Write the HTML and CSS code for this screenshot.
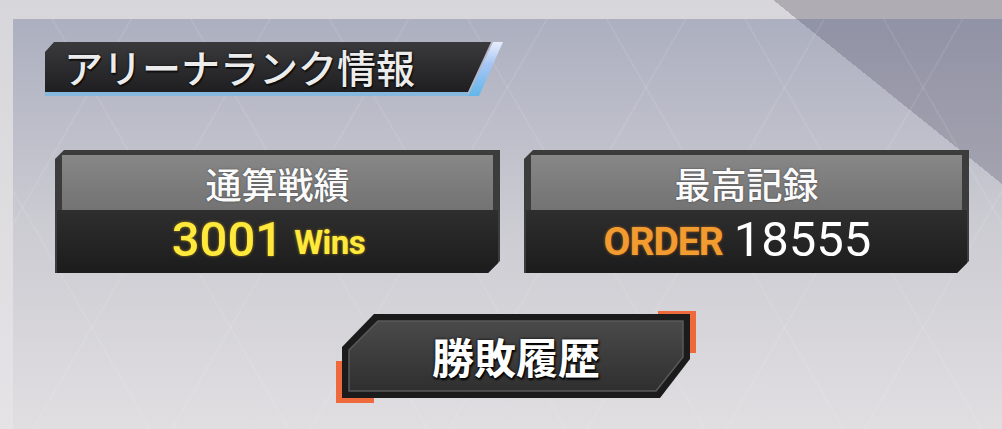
FILE: index.html
```html
<!DOCTYPE html>
<html lang="ja">
<head>
    <meta charset="utf-8">
    <title>アリーナランク情報</title>
    <link rel="stylesheet" href="styles.css">
</head>
<body>
    <div class="screen">
        <div class="top-strip"></div>
        <div class="panel">
            <div class="heading">
                <span class="heading-text">アリーナランク情報</span>
            </div>

            <div class="cards">
                <div class="card">
                    <div class="card-head">通算戦績</div>
                    <div class="card-body">
                        <span class="wins-num">3001</span>
                        <span class="wins-unit">Wins</span>
                    </div>
                </div>
                <div class="card">
                    <div class="card-head">最高記録</div>
                    <div class="card-body">
                        <span class="order-label">ORDER</span>
                        <span class="order-num">18555</span>
                    </div>
                </div>
            </div>

            <button class="history-btn" type="button">
                <svg class="btn-shape" viewBox="0 0 360 92" width="360" height="92">
                    <defs>
                        <linearGradient id="btnFill" x1="0" y1="0" x2="0" y2="1">
                            <stop offset="0" stop-color="#4a4a4b"/>
                            <stop offset="1" stop-color="#2f2f30"/>
                        </linearGradient>
                    </defs>
                    <!-- orange corner brackets -->
                    <rect x="322" y="0" width="38" height="42" fill="#ee6a3c"/>
                    <rect x="0" y="50" width="38" height="42" fill="#ee6a3c"/>
                    <!-- outer rim -->
                    <polygon points="38,3 354,3 354,48 324,87 6,87 6,36" fill="#1b1b1c"/>
                    <!-- inner plate -->
                    <polygon points="42,10 347,10 347,46 320,80 13,80 13,39" fill="url(#btnFill)" stroke="#5a5a5b" stroke-width="1.5"/>
                </svg>
                <span class="btn-label">勝敗履歴</span>
            </button>
        </div>
    </div>
</body>
</html>
```

FILE: styles.css
```css
* {
    margin: 0;
    padding: 0;
    box-sizing: border-box;
}
body {
    width: 1002px;
    height: 429px;
    overflow: hidden;
    font-family: "Noto Sans CJK JP", "Noto Sans", sans-serif;
}
.screen {
    width: 1002px;
    height: 429px;
    display: flex;
    flex-direction: column;
    background:
        linear-gradient(38.8deg, transparent 85.1%, rgba(70, 62, 80, 0.28) 85.1%),
        linear-gradient(to bottom, #d7d6da, #e5e3e5);
}
.top-strip {
    height: 19px;
    flex: none;
}
.panel {
    flex: 1;
    margin-left: 13px;
    display: flex;
    flex-direction: column;
    align-items: flex-start;
    padding-left: 32px;
    background:
        repeating-linear-gradient(60deg, transparent 0 118px, rgba(255, 255, 255, 0.07) 118px 120px),
        repeating-linear-gradient(-60deg, transparent 0 118px, rgba(255, 255, 255, 0.07) 118px 120px),
        linear-gradient(to bottom, rgba(80, 92, 135, 0.32), rgba(120, 125, 150, 0.18) 50%, rgba(170, 165, 175, 0.08));
}

/* heading bar */
.heading {
    position: relative;
    width: 458px;
    height: 54px;
    margin-top: 23px;
    display: flex;
    align-items: center;
    padding: 0 0 6px 19px;
}
.heading::before {
    content: "";
    position: absolute;
    inset: 0;
    background:
        linear-gradient(to bottom, transparent 50px, #86b7de 50px),
        linear-gradient(to bottom, #3a3a3c, #1f1f21 50px);
    clip-path: polygon(9px 0, 446px 0, 423px 50px, 423px 54px, 0 54px, 0 10px);
}
.heading::after {
    content: "";
    position: absolute;
    inset: 0;
    background: linear-gradient(to bottom, #e8eefc, #a8c6f4 40%, #62b6ea);
    clip-path: polygon(448px 0, 458px 0, 434px 54px, 423px 54px);
}
.heading-text {
    position: relative;
    font-size: 39px;
    font-weight: 500;
    color: #ececec;
    text-shadow: 0 0 2px #000, 1px 2px 1px #111;
}

/* cards */
.cards {
    display: flex;
    gap: 24px;
    margin-top: 54px;
    margin-left: 10px;
}
.card {
    width: 445px;
    height: 123px;
    display: flex;
    flex-direction: column;
    background: #3c3c3d;
    padding: 5px 7px 0;
    clip-path: polygon(9px 0, 100% 0, 100% calc(100% - 12px), calc(100% - 12px) 100%, 0 100%, 0 9px);
}
.card-head {
    height: 55px;
    flex: none;
    display: flex;
    align-items: center;
    justify-content: center;
    background: linear-gradient(to bottom, #878788, #737374);
    color: #fbfbfb;
    font-size: 36px;
    font-weight: 500;
    text-shadow: 0 0 2px rgba(0, 0, 0, 0.5);
}
.card-body {
    flex: 1;
    margin: 0 -5px;
    display: flex;
    align-items: center;
    justify-content: center;
    gap: 11px;
    padding: 0 18px 4px 0;
    background: linear-gradient(to bottom, #2e2e2f, #1c1c1d);
    font-family: Roboto, "Liberation Sans", sans-serif;
}
.wins-num {
    font-size: 49px;
    font-weight: 500;
    color: #ffe93c;
    text-shadow: 0 0 3px rgba(255, 200, 0, 0.6);
}
.wins-unit {
    font-size: 33px;
    font-weight: 700;
    letter-spacing: -0.5px;
    color: #ffe93c;
    text-shadow: 0 0 3px rgba(255, 200, 0, 0.6);
    margin-top: 6px;
}
.order-label {
    font-size: 39px;
    font-weight: 700;
    letter-spacing: -1px;
    color: #f29b30;
    text-shadow: 0 0 3px rgba(255, 140, 0, 0.5);
    margin-top: 4px;
}
.order-num {
    font-size: 49px;
    font-weight: 400;
    color: #ffffff;
}

/* history button */
.history-btn {
    display: grid;
    margin-top: 38px;
    margin-left: 291px;
    border: none;
    background: none;
    cursor: pointer;
}
.btn-shape,
.btn-label {
    grid-area: 1 / 1;
}
.btn-label {
    align-self: center;
    justify-self: center;
    padding-bottom: 4px;
    font-family: "Noto Sans CJK JP", sans-serif;
    font-size: 42px;
    font-weight: 700;
    color: #ffffff;
    text-shadow: 0 0 3px #000, 1px 2px 2px #000;
}
```
